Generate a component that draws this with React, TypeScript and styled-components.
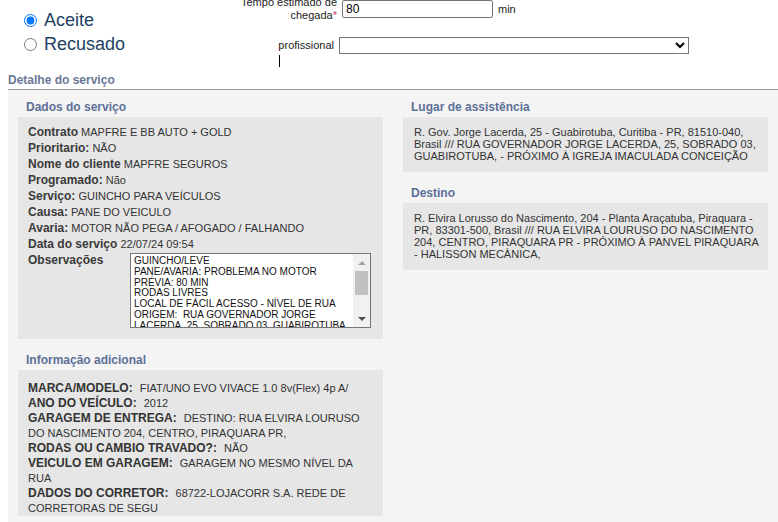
import styled, { createGlobalStyle } from "styled-components";

const GlobalStyle = createGlobalStyle`
  html, body {
    margin: 0;
    padding: 0;
    background: #fff;
    overflow: hidden;
  }
  body {
    font-family: "Liberation Sans", Arial, sans-serif;
    color: #333;
  }
`;

const obs = `GUINCHO/LEVE
PANE/AVARIA: PROBLEMA NO MOTOR
PRÉVIA: 80 MIN
RODAS LIVRES
LOCAL DE FÁCIL ACESSO - NÍVEL DE RUA
ORIGEM:  RUA GOVERNADOR JORGE LACERDA, 25, SOBRADO 03, GUABIROTUBA, - PRÓXIMO À IGREJA IMACULADA CONCEIÇÃO
DESTINO: RUA ELVIRA LOURUSO DO NASCIMENTO 204, CENTRO, PIRAQUARA PR - PRÓXIMO À PANVEL PIRAQUARA - HALISSON MECÂNICA,`;

const dados = [
  ["Contrato", "MAPFRE E BB AUTO + GOLD"],
  ["Prioritario:", "NÃO"],
  ["Nome do cliente", "MAPFRE SEGUROS"],
  ["Programado:", "Não"],
  ["Serviço:", "GUINCHO PARA VEÍCULOS"],
  ["Causa:", "PANE DO VEICULO"],
  ["Avaria:", "MOTOR NÃO PEGA / AFOGADO / FALHANDO"],
  ["Data do serviço", "22/07/24 09:54"],
];

const info = [
  ["MARCA/MODELO:", "FIAT/UNO EVO VIVACE 1.0 8v(Flex) 4p A/"],
  ["ANO DO VEÍCULO:", "2012"],
  ["GARAGEM DE ENTREGA:", "DESTINO: RUA ELVIRA LOURUSO DO NASCIMENTO 204, CENTRO, PIRAQUARA PR,"],
  ["RODAS OU CAMBIO TRAVADO?:", "NÃO"],
  ["VEICULO EM GARAGEM:", "GARAGEM NO MESMO NÍVEL DA RUA"],
  ["DADOS DO CORRETOR:", "68722-LOJACORR S.A. REDE DE CORRETORAS DE SEGU"],
];

const App = () => {
  return (
    <Page>
      <GlobalStyle />
      <Header>
        <RadioGroup>
          <RadioLabel>
            <Radio type="radio" name="status" defaultChecked />
            Aceite
          </RadioLabel>
          <RadioLabel>
            <Radio type="radio" name="status" />
            Recusado
          </RadioLabel>
        </RadioGroup>
        <FormBlock>
          <FieldRow $top={0}>
            <FieldLabel $width={107}>
              Tempo estimado de chegada<Required>*</Required>
            </FieldLabel>
            <NumberInput type="text" defaultValue="80" />
            <Unit>min</Unit>
          </FieldRow>
          <FieldRow $top={15}>
            <FieldLabel $width={104}>profissional</FieldLabel>
            <Select defaultValue="">
              <option value=""></option>
            </Select>
          </FieldRow>
          <Caret />
        </FormBlock>
      </Header>

      <DetailTitle>Detalhe do serviço</DetailTitle>

      <Panel>
        <Column>
          <Section $first>
            <SectionTitle>Dados do serviço</SectionTitle>
            <DadosBox>
              {dados.map(([k, v]) => (
                <DadosRow key={k}>
                  <Key>{k}</Key> {v}
                </DadosRow>
              ))}
              <ObsRow>
                <ObsLabel>Observações</ObsLabel>
                <ObsFrame>
                  <ObsText readOnly defaultValue={obs} />
                  <ScrollTrack>
                    <ScrollButton>
                      <svg width="8" height="4" viewBox="0 0 8 4">
                        <path d="M0 4 L4 0 L8 4 Z" fill="#a3a3a3" />
                      </svg>
                    </ScrollButton>
                    <ScrollThumb />
                    <ScrollSpacer />
                    <ScrollButton>
                      <svg width="8" height="4" viewBox="0 0 8 4">
                        <path d="M0 0 L8 0 L4 4 Z" fill="#505050" />
                      </svg>
                    </ScrollButton>
                  </ScrollTrack>
                </ObsFrame>
              </ObsRow>
            </DadosBox>
          </Section>
          <Section>
            <SectionTitle>Informação adicional</SectionTitle>
            <InfoBox>
              {info.map(([k, v]) => (
                <InfoItem key={k}>
                  <InfoKey>{k}</InfoKey> {v}
                </InfoItem>
              ))}
            </InfoBox>
          </Section>
        </Column>
        <Column>
          <Section $first>
            <SectionTitle>Lugar de assistência</SectionTitle>
            <PlaceBox>
              R. Gov. Jorge Lacerda, 25 - Guabirotuba, Curitiba - PR, 81510-040,
              Brasil /// RUA GOVERNADOR JORGE LACERDA, 25, SOBRADO 03,
              GUABIROTUBA, - PRÓXIMO À IGREJA IMACULADA CONCEIÇÃO
            </PlaceBox>
          </Section>
          <Section>
            <SectionTitle>Destino</SectionTitle>
            <PlaceBox>
              R. Elvira Lorusso do Nascimento, 204 - Planta Araçatuba, Piraquara -
              PR, 83301-500, Brasil /// RUA ELVIRA LOURUSO DO NASCIMENTO 204,
              CENTRO, PIRAQUARA PR - PRÓXIMO À PANVEL PIRAQUARA - HALISSON
              MECÂNICA,
            </PlaceBox>
          </Section>
        </Column>
      </Panel>
    </Page>
  );
};

export default App;

const Page = styled.div`
  width: 778px;
  box-sizing: border-box;
  padding-left: 8px;
  margin-top: -4px;
`;

const Header = styled.div`
  display: flex;
  align-items: flex-start;
`;

const RadioGroup = styled.div`
  width: 222px;
  box-sizing: border-box;
  padding: 12px 0 0 16px;
`;

const RadioLabel = styled.label`
  display: flex;
  align-items: center;
  height: 24px;
  font-size: 18px;
  color: #1e3e62;
`;

const Radio = styled.input`
  width: 13px;
  height: 13px;
  margin: 0 7px 0 0;
`;

const FormBlock = styled.div`
  display: flex;
  flex-direction: column;
`;

const FieldRow = styled.div<{ $top: number }>`
  display: flex;
  align-items: center;
  margin-top: ${(p) => p.$top}px;
`;

const FieldLabel = styled.div<{ $width: number }>`
  width: ${(p) => p.$width}px;
  margin-right: 5px;
  text-align: right;
  font-size: 11px;
  line-height: 13px;
  color: #222;
`;

const Required = styled.span`
  color: #c93a6b;
`;

const NumberInput = styled.input`
  width: 151px;
  height: 18px;
  box-sizing: border-box;
  border: 1px solid #767676;
  border-radius: 2px;
  padding: 0 3px;
  font-family: "Liberation Sans", Arial, sans-serif;
  font-size: 12px;
  color: #000;
  background: #fff;
`;

const Unit = styled.span`
  margin-left: 5px;
  font-size: 11px;
  color: #222;
`;

const Select = styled.select`
  width: 350px;
  height: 17px;
  box-sizing: border-box;
  border: 1px solid #767676;
  border-radius: 0;
  background: #fff;
  font-family: "Liberation Sans", Arial, sans-serif;
  font-size: 11px;
`;

const Caret = styled.div`
  width: 1px;
  height: 12px;
  margin: 1px 0 0 49px;
  background: #000;
`;

const DetailTitle = styled.div`
  margin-top: 6px;
  padding-bottom: 2px;
  border-bottom: 1px solid #999;
  font-size: 12px;
  font-weight: bold;
  line-height: 14px;
  color: #6a7896;
`;

const Panel = styled.div`
  display: grid;
  grid-template-columns: 365px 365px;
  column-gap: 20px;
  align-items: start;
  height: 432px;
  box-sizing: border-box;
  overflow: hidden;
  padding: 9px 10px 0;
  background: #f4f4f4;
`;

const Column = styled.div`
  display: flex;
  flex-direction: column;
`;

const Section = styled.div<{ $first?: boolean }>`
  margin-top: ${(p) => (p.$first ? 0 : 13)}px;
`;

const SectionTitle = styled.div`
  padding-left: 8px;
  margin-bottom: 2px;
  font-size: 12px;
  font-weight: bold;
  line-height: 16px;
  color: #5d7097;
`;

const DadosBox = styled.div`
  background: #e6e6e6;
  padding: 7px 10px 11px;
`;

const DadosRow = styled.div`
  font-size: 11px;
  line-height: 16px;
  color: #333;
`;

const Key = styled.span`
  font-size: 12px;
  font-weight: bold;
  color: #3a3a3a;
`;

const ObsRow = styled.div`
  display: flex;
  align-items: flex-start;
`;

const ObsLabel = styled.div`
  width: 102px;
  font-size: 12px;
  font-weight: bold;
  line-height: 16px;
  color: #3a3a3a;
`;

const ObsFrame = styled.div`
  display: flex;
  width: 241px;
  height: 75px;
  box-sizing: border-box;
  margin-top: 1px;
  border: 1px solid #767676;
  background: #fff;
`;

const ObsText = styled.textarea`
  flex: 1;
  min-width: 0;
  margin: 0;
  padding: 2px 1px 0 3px;
  border: none;
  outline: none;
  resize: none;
  overflow: hidden;
  background: #fff;
  font-family: "Liberation Sans", Arial, sans-serif;
  font-size: 10px;
  line-height: 10.8px;
  color: #111;
`;

const ScrollTrack = styled.div`
  display: flex;
  flex-direction: column;
  align-items: center;
  width: 17px;
  background: #f1f1f1;
`;

const ScrollButton = styled.div`
  display: flex;
  align-items: center;
  justify-content: center;
  width: 17px;
  height: 17px;
`;

const ScrollThumb = styled.div`
  width: 13px;
  height: 24px;
  background: #c1c1c1;
`;

const ScrollSpacer = styled.div`
  flex: 1;
`;

const InfoBox = styled.div`
  background: #e6e6e6;
  padding: 11px 10px 0;
`;

const InfoItem = styled.div`
  font-size: 11px;
  line-height: 15px;
  color: #333;
`;

const InfoKey = styled.span`
  font-size: 12px;
  font-weight: bold;
  margin-right: 4px;
  color: #333;
`;

const PlaceBox = styled.div`
  background: #e6e6e6;
  padding: 9px 6px 10px 11px;
  font-size: 11px;
  line-height: 12px;
  color: #333;
`;
